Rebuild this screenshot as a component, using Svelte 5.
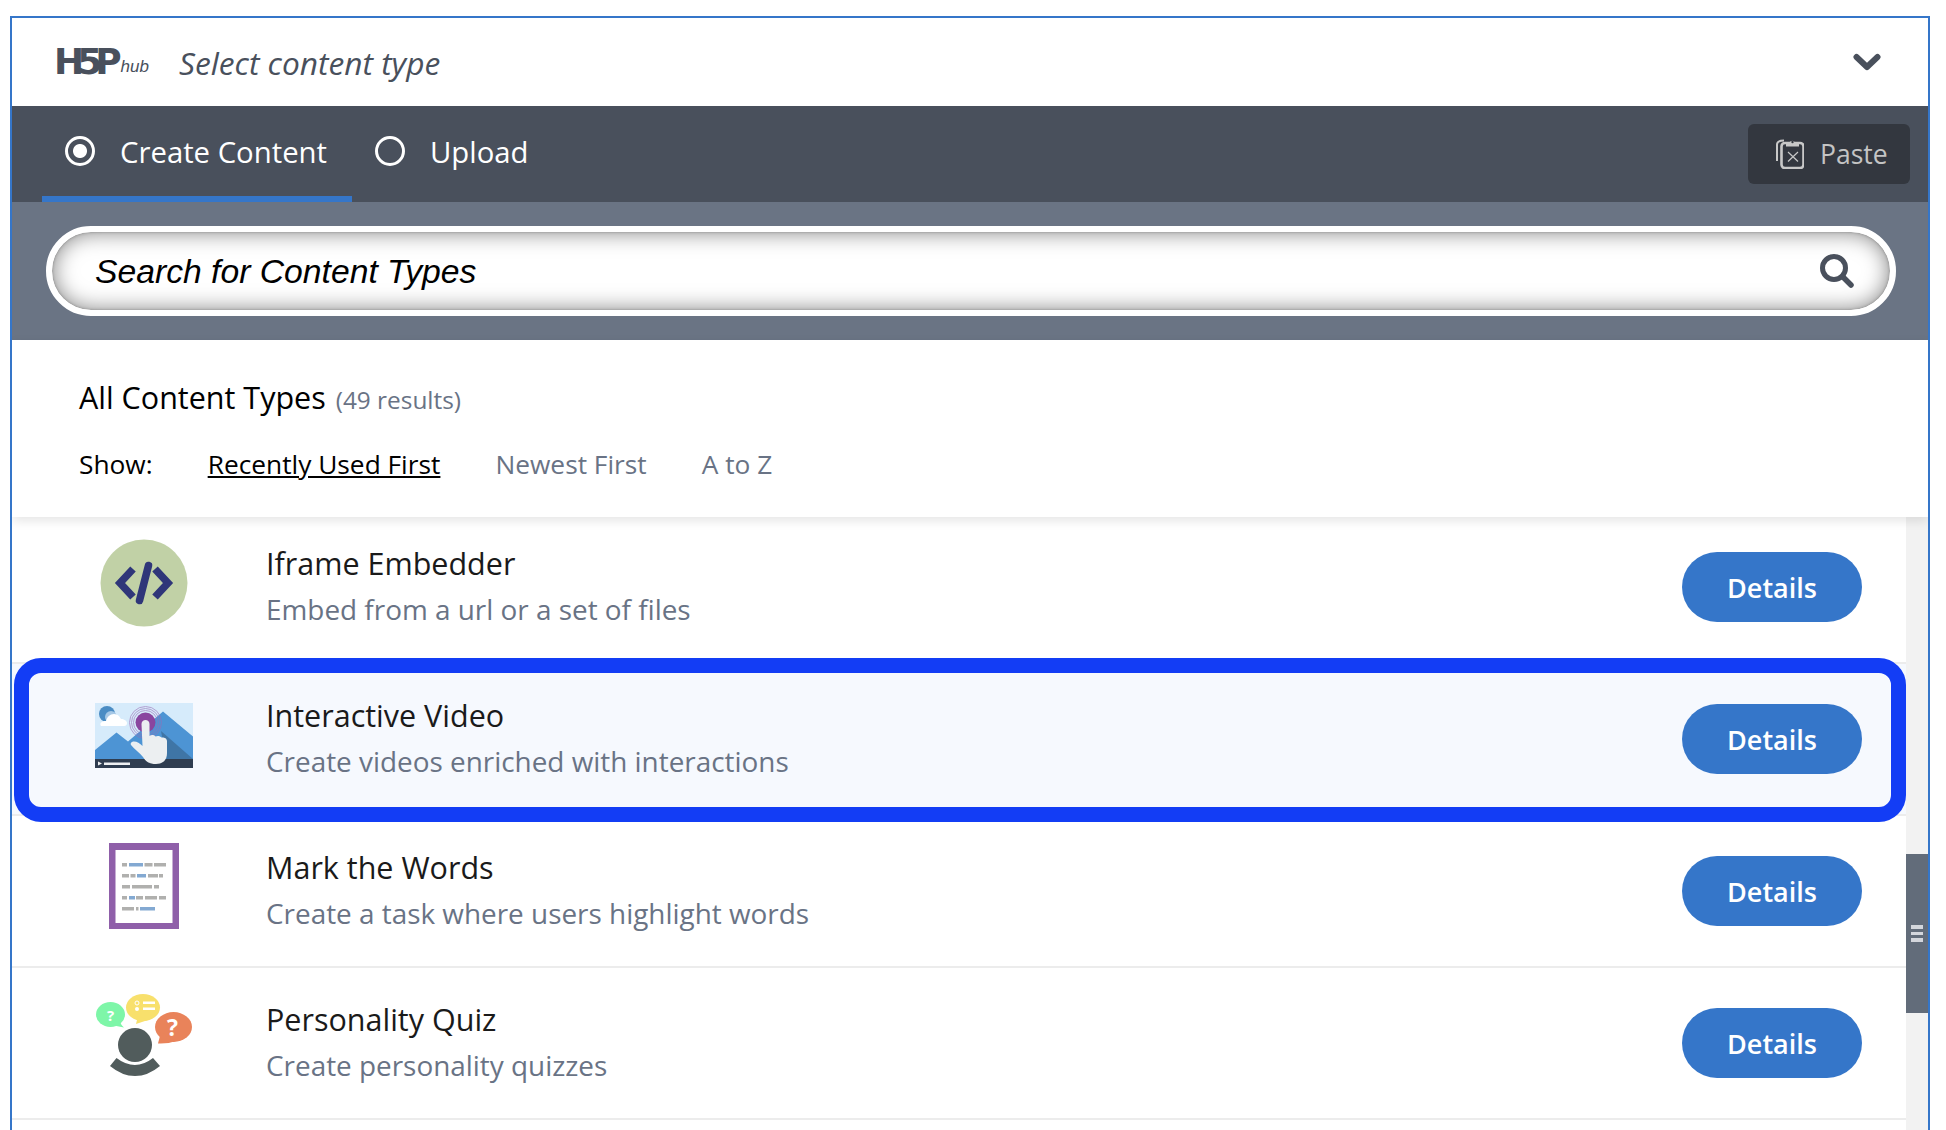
<script lang="ts">
	const sorts = ['Recently Used First', 'Newest First', 'A to Z'];
	const rows = [
		{ id: 'iframe', title: 'Iframe Embedder', desc: 'Embed from a url or a set of files' },
		{ id: 'video', title: 'Interactive Video', desc: 'Create videos enriched with interactions' },
		{ id: 'words', title: 'Mark the Words', desc: 'Create a task where users highlight words' },
		{ id: 'quiz', title: 'Personality Quiz', desc: 'Create personality quizzes' }
	];
	// grey and blue dashes of the Mark the Words page: [x, y, width, blue]
	const dashes = [
		[0, 0, 5, 0], [7, 0, 14, 1], [22.5, 0, 8, 0], [32, 0, 12, 0],
		[0, 11, 7, 0], [8.5, 11, 5, 0], [15, 11, 9, 1], [26, 11, 10, 0], [37, 11, 4, 0],
		[0, 22, 8, 0], [10, 22, 20, 0], [32, 22, 5, 0],
		[0, 33, 5, 0], [7, 33, 6, 1], [14, 33, 7, 0], [23, 33, 12, 0], [37, 33, 7, 0],
		[0, 44, 12, 0], [14, 44, 2.5, 0], [18, 44, 15, 1]
	];
</script>

<div class="hub">
	<header class="head">
		<div class="logo"><span class="logo-h5p">H5P</span><span class="logo-hub">hub</span></div>
		<div class="head-title">Select content type</div>
		<svg class="chevron" viewBox="0 0 28 20" width="28" height="20">
			<path d="M3.500 5 14 15 24.500 5" fill="none" stroke="#49505c" stroke-width="6" stroke-linecap="round" stroke-linejoin="round" />
		</svg>
	</header>

	<nav class="tabs">
		<div class="tab active">
			<span class="radio"></span>
			<span class="tab-label">Create Content</span>
		</div>
		<div class="tab">
			<span class="radio"></span>
			<span class="tab-label">Upload</span>
		</div>
		<button class="paste">
			<svg viewBox="0 0 28 30" width="28" height="30" fill="none" stroke="#c8c8c8">
				<path d="M1 22V5.500C1 3 3 1.500 8 1.500" stroke-width="2" />
				<rect x="5.500" y="4" width="22" height="25" rx="3.500" stroke-width="2.600" />
				<path d="M10 3.500h3.500a3 3 0 0 1 5.500 0h4V7.500H10z" fill="#c8c8c8" stroke="none" />
				<circle cx="16.500" cy="3" r="1.200" fill="#33373f" stroke="none" />
				<path d="M12 13 22 22.500M22 13 12 22.500" stroke-width="1.200" />
			</svg>
			Paste
		</button>
	</nav>

	<div class="search-bar">
		<div class="search">
			<span class="search-text">Search for Content Types</span>
			<svg viewBox="0 0 34 34" width="34" height="34">
				<circle cx="14" cy="14" r="11.500" fill="none" stroke="#49505c" stroke-width="5" />
				<path d="M22.500 22.500 31 31" stroke="#49505c" stroke-width="5.500" stroke-linecap="round" />
			</svg>
		</div>
	</div>

	<section class="filters">
		<h2 class="all-title">All Content Types <span class="count">(49 results)</span></h2>
		<div class="show">
			<span class="show-label">Show:</span>
			{#each sorts as s, i}
				<span class="sort" class:current={i === 0}>{s}</span>
			{/each}
		</div>
	</section>

	<div class="list-wrap">
		<ul class="list">
			{#each rows as row}
				<li class="row {row.id}">
					<div class="icon">
						{#if row.id === 'iframe'}
							<svg viewBox="0 0 88 88" width="88" height="88">
								<circle cx="44" cy="44" r="43.500" fill="#c1d1a6" />
								<g fill="none" stroke="#2f3679" stroke-width="7.500">
									<path d="M33 30 20 44 33 58" />
									<path d="M55 30 68 44 55 58" />
									<path d="M48.500 26.500 39.500 61.500" stroke-linecap="round" />
								</g>
							</svg>
						{:else if row.id === 'video'}
							<svg viewBox="0 0 98 65" width="98" height="65">
								<rect width="98" height="65" fill="#d6ebfb" />
								<circle cx="12" cy="11" r="8" fill="#4a8cc4" />
								<circle cx="16" cy="14" r="6" fill="#a6c8e6" />
								<path d="M6 23c-2-3 1-5 5-5 1-4 4-7 8-7s6 3 7 5c3 0 6 2 6 4s-1 3-3 3z" fill="#fff" />
								<path d="M0 47 21.500 29.500 33 38.500 68 8.500 98 33.500V56H0z" fill="#4d94d4" />
								<path d="M66 28 98 56v3H72z" fill="#3d709e" opacity="0.85" />
								<rect y="56" width="98" height="9" fill="#2f3d50" />
								<path d="M3 58.500 7 60.500 3 62.500z" fill="#eef0f2" />
								<rect x="9" y="59.500" width="26" height="2.500" fill="#eef0f2" />
								<g fill="none" stroke="#9b6db6" opacity="0.6" stroke-width="1">
									<circle cx="50.500" cy="19.500" r="12" />
									<circle cx="50.500" cy="19.500" r="14" />
									<circle cx="50.500" cy="19.500" r="16" />
								</g>
								<circle cx="50.500" cy="19.500" r="10" fill="#8a459f" />
								<path d="M46.500 21c0-5.500 8-5.500 8 0V33c2-1.500 5-1 6 .5 2-1 5-.5 6 1 2-.5 5.500.5 5.500 3.500V50c0 7-4 11-11 11-6 0-10-2-13-7-3-4-9-8-12-12-1-2 1-3.500 3-3.500 3 0 6 2 8.500 4.500z" fill="#eceff1" />
							</svg>
						{:else if row.id === 'words'}
							<svg viewBox="0 0 70 86" width="70" height="86">
								<rect width="70" height="86" fill="#8f5fa9" />
								<rect x="6.500" y="7" width="57" height="73" fill="#fff" />
								{#each dashes as d}
									<rect x={13 + d[0]} y={20 + d[1]} width={d[2]} height="3.500" fill={d[3] ? '#83a9d2' : '#b0b0ae'} />
								{/each}
							</svg>
						{:else}
							<svg viewBox="0 0 96 82" width="96" height="82">
								<ellipse cx="14.500" cy="20.500" rx="14.500" ry="12.500" fill="#7ef6a8" />
								<path d="M14 30q8 3 14 3.500-4-3.500-4-7z" fill="#7ef6a8" />
								<ellipse cx="47" cy="13.500" rx="17" ry="13.500" fill="#f8e06c" />
								<path d="M40 30 52 26 42 22z" fill="#f8e06c" />
								<ellipse cx="77.500" cy="33" rx="18.500" ry="15" fill="#e9835a" />
								<path d="M62 49.500q10 .5 18-2.500L65 38z" fill="#e9835a" />
								<text x="14.700" y="26.500" class="qmark" font-size="15" fill="#fff">?</text>
								<text x="76.500" y="41.500" class="qmark" font-size="23" fill="#fff">?</text>
								<circle cx="41" cy="9" r="2" fill="none" stroke="#fff" />
								<circle cx="41" cy="15" r="2" fill="#fff" />
								<rect x="47" y="7.500" width="12" height="2.500" fill="#fff" />
								<rect x="47" y="13.500" width="12" height="2.500" fill="#fff" />
								<circle cx="39" cy="51" r="17" fill="#515c5c" />
								<path d="M14 72 20.500 64Q39 78 57 64L64 72Q52 82 39 82 26 82 14 72z" fill="#515c5c" />
							</svg>
						{/if}
					</div>
					<div class="text">
						<div class="title">{row.title}</div>
						<div class="desc">{row.desc}</div>
					</div>
					<button class="details">Details</button>
				</li>
			{/each}
		</ul>
		<div class="track">
			<div class="thumb"><i></i><i></i><i></i></div>
		</div>
	</div>
</div>

<style>
	:global(body) {
		margin: 0;
		background: #fff;
		overflow: hidden;
	}

	.hub {
		box-sizing: border-box;
		margin: 16px 0 0 10px;
		width: 1920px;
		height: 1114px;
		border: solid #3576c9;
		border-width: 2px 2px 0 2px;
		font-family: 'Open Sans', sans-serif;
		overflow: hidden;
	}

	.head {
		height: 88px;
		display: flex;
		align-items: center;
		padding: 0 47px 0 45px;
		background: #fff;
	}

	.logo {
		display: flex;
		align-items: flex-end;
		width: 122px;
		margin-left: -3px;
		margin-right: 3px;
		color: #49505c;
	}

	.logo-h5p {
		font-family: 'DejaVu Sans', sans-serif;
		font-weight: 700;
		font-size: 36px;
		line-height: 30px;
		letter-spacing: -7px;
	}

	.logo-hub {
		font-family: 'Liberation Sans', sans-serif;
		font-style: italic;
		font-size: 17px;
		line-height: 20px;
		margin-left: 6px;
	}

	.head-title {
		flex: 1;
		font-style: italic;
		font-size: 31.700px;
		color: #49505c;
	}

	.tabs {
		height: 96px;
		display: flex;
		background: #49505c;
		padding: 0 18px 0 30px;
	}

	.tab {
		display: flex;
		align-items: center;
		gap: 25px;
		padding: 0 23px 6px;
		font-size: 29.300px;
		color: #fff;
		white-space: nowrap;
		box-sizing: border-box;
	}

	.tab-label {
		margin-top: 2px;
	}

	.tab.active {
		border-bottom: 6px solid #3576c9;
		padding-bottom: 0;
		width: 310px;
	}

	.radio {
		box-sizing: border-box;
		width: 30px;
		height: 30px;
		border: 3px solid #fff;
		border-radius: 50%;
		flex-shrink: 0;
	}

	.tab.active .radio {
		background: radial-gradient(circle, #fff 0 6.500px, transparent 7.500px);
	}

	.paste {
		margin: 18px 0 18px auto;
		width: 162px;
		height: 60px;
		display: flex;
		align-items: center;
		gap: 16px;
		padding: 0 0 0 28px;
		border: 0;
		border-radius: 6px;
		background: #33373f;
		color: #c4c4c4;
		font: 26.500px 'Open Sans', sans-serif;
	}

	.search-bar {
		height: 138px;
		box-sizing: border-box;
		padding: 24px 32px 0 34px;
		background: #6a7484;
	}

	.search {
		box-sizing: border-box;
		height: 90px;
		border: 6px solid #fff;
		border-radius: 45px;
		display: flex;
		align-items: center;
		justify-content: space-between;
		padding: 0 36px 0 43px;
		background: #fff;
		box-shadow: inset 0 0 22px rgba(0, 0, 0, 0.5), inset 0 0 3px rgba(0, 0, 0, 0.3);
	}

	.search-text {
		font-family: 'Liberation Sans', sans-serif;
		font-style: italic;
		font-size: 33.700px;
		color: #000;
	}

	.filters {
		height: 177px;
		box-sizing: border-box;
		padding: 36px 67px 0;
		background: #fff;
		position: relative;
		z-index: 1;
		box-shadow: 0 4px 10px rgba(0, 0, 0, 0.1);
	}

	.all-title {
		margin: 0;
		font-weight: 400;
		font-size: 30.500px;
		color: #000;
	}

	.count {
		font-size: 24.400px;
		color: #697385;
		margin-left: 2px;
	}

	.show {
		display: flex;
		gap: 55px;
		margin-top: 28px;
		font-size: 26.300px;
		color: #697385;
	}

	.show-label {
		color: #000;
	}

	.sort.current {
		color: #000;
		text-decoration: underline;
	}

	.list-wrap {
		display: flex;
		height: 620px;
	}

	.list {
		flex: 1;
		margin: 0;
		padding: 0;
		list-style: none;
	}

	.row {
		height: 152px;
		box-sizing: border-box;
		display: flex;
		align-items: center;
		padding: 0 44px 0 0;
		border-bottom: 2px solid #ececec;
		position: relative;
	}

	.row.iframe {
		height: 147px;
		padding-bottom: 5px;
	}

	.row.video {
		background: #f6f9fe;
	}

	.row.video::after {
		content: '';
		position: absolute;
		inset: -6px 0 -8px 2px;
		border: 15px solid #133df5;
		border-radius: 27px;
		pointer-events: none;
	}

	.icon {
		box-sizing: border-box;
		width: 254px;
		padding-left: 10px;
		display: flex;
		justify-content: center;
		flex-shrink: 0;
	}

	.iframe .icon {
		padding-bottom: 8px;
	}

	.video .icon {
		padding-bottom: 7px;
	}

	.words .icon {
		padding-bottom: 10px;
	}

	.quiz .icon {
		padding-bottom: 16px;
	}

	.text {
		flex: 1;
		padding-bottom: 3px;
	}

	.title {
		font-size: 30.500px;
		color: #1a1a1a;
		line-height: 46px;
	}

	.desc {
		font-size: 27.900px;
		color: #697385;
		line-height: 46px;
	}

	.qmark {
		font-family: 'Open Sans', sans-serif;
		font-weight: 700;
		text-anchor: middle;
	}

	.details {
		width: 180px;
		height: 70px;
		border: 0;
		border-radius: 35px;
		background: #3576c9;
		color: #fff;
		font: 600 27px 'Open Sans', sans-serif;
	}

	.track {
		width: 22px;
		background: #f2f2f2;
		padding-top: 337px;
		flex-shrink: 0;
	}

	.thumb {
		height: 159px;
		background: #626c7a;
		display: flex;
		flex-direction: column;
		align-items: center;
		justify-content: center;
		gap: 3px;
	}

	.thumb i {
		width: 12px;
		height: 3.500px;
		background: #d3d6dc;
	}
</style>
